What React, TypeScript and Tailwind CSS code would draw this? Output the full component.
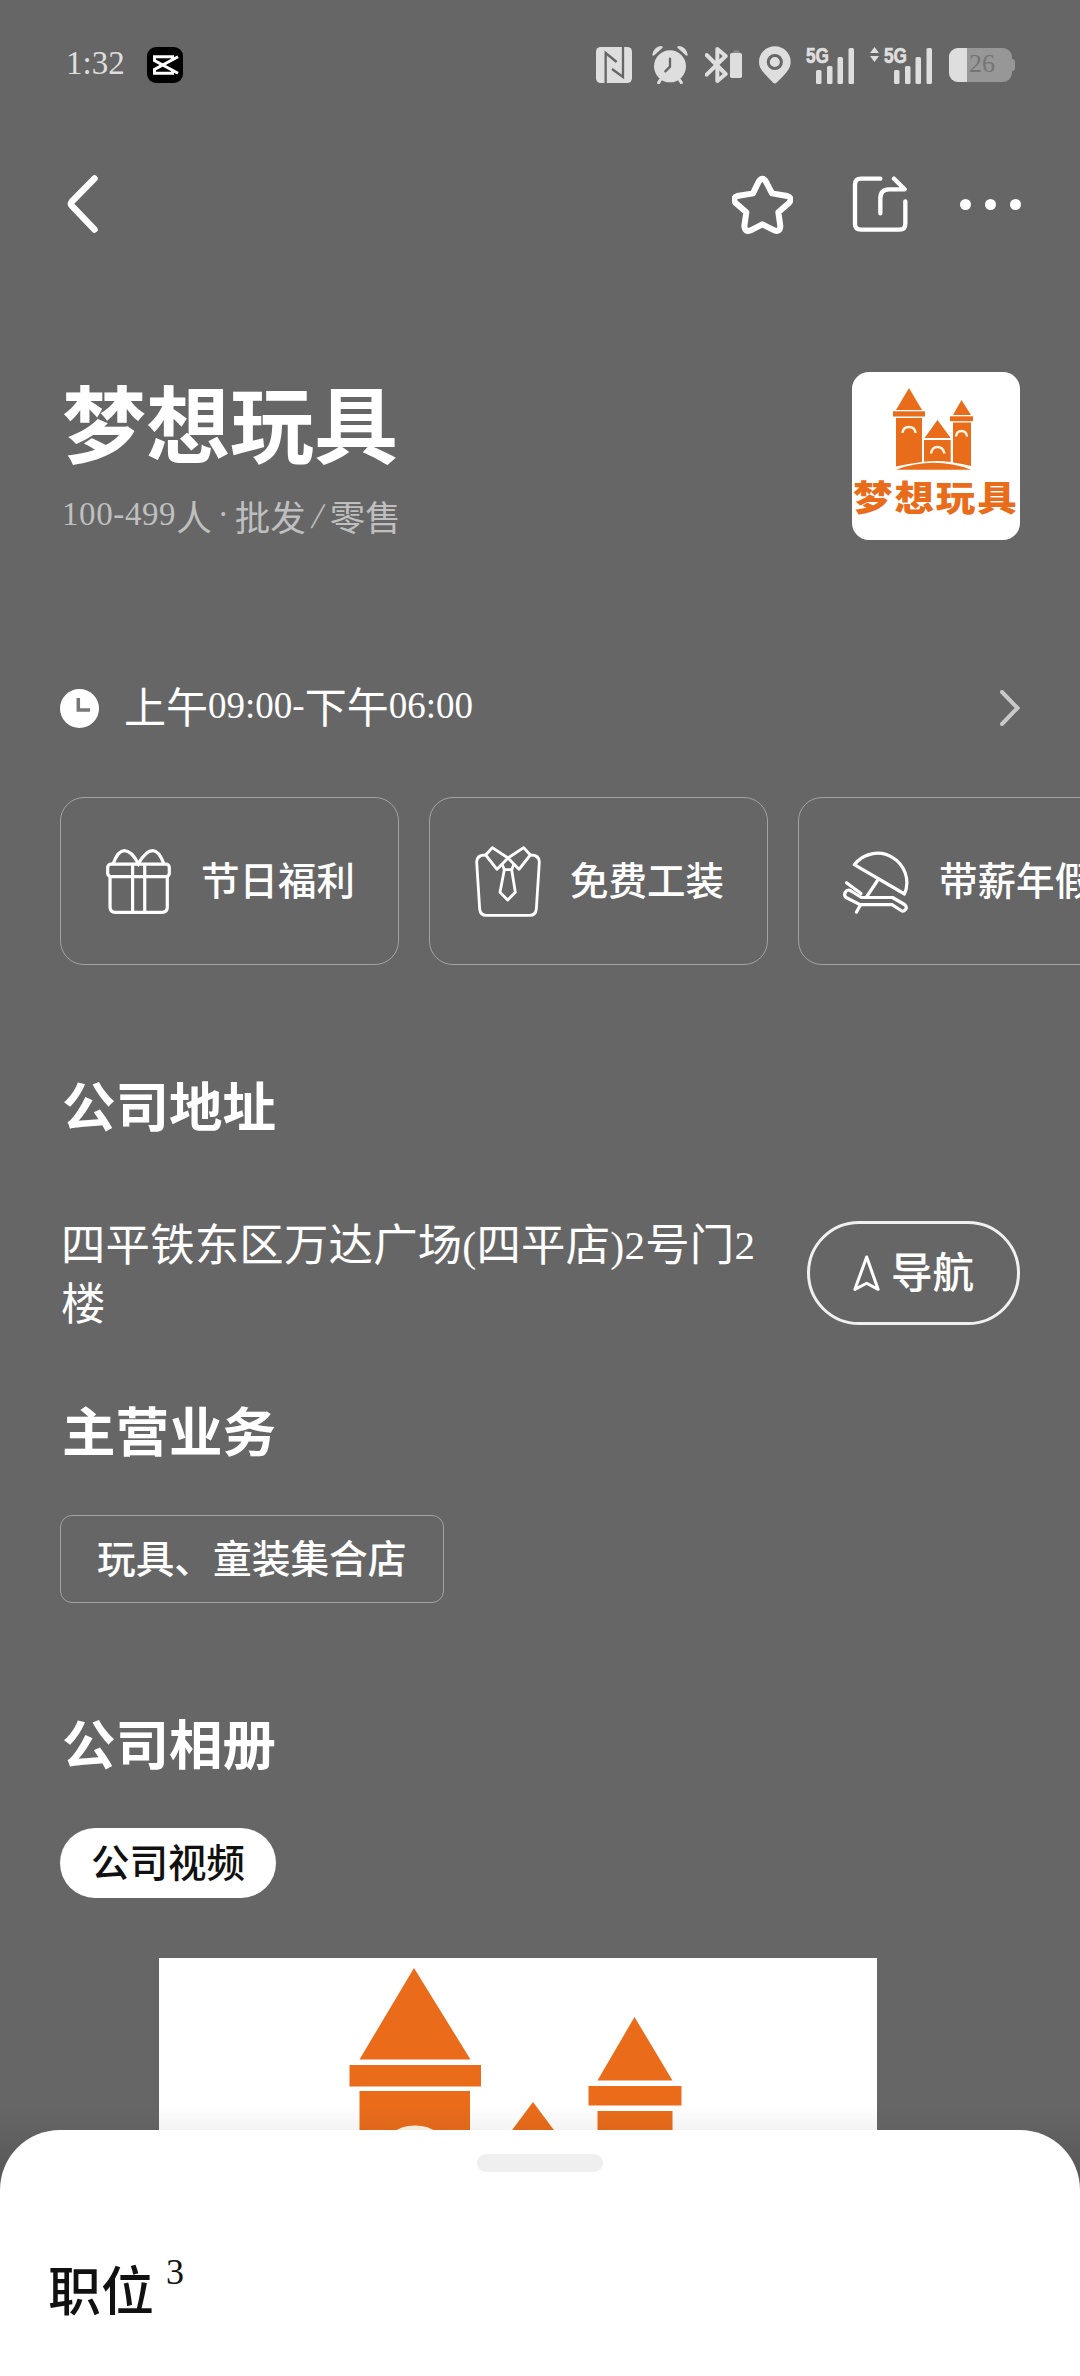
import type { ReactNode } from "react";
import clsx from "clsx";

const Num = ({
  children,
  className,
}: {
  children: ReactNode;
  className?: string;
}) => (
  <span
    className={clsx(
      "font-['Liberation_Serif',serif] leading-none font-normal",
      className
    )}
  >
    {children}
  </span>
);

const Signal = ({ arrows }: { arrows?: boolean }) => (
  <svg
    width={arrows ? 62 : 48}
    height="48"
    viewBox={arrows ? "-14 -5 62 48" : "0 -5 48 48"}
    fill="#dedede"
  >
    {arrows && <path d="M-14 7 L-9.5 1 L-5 7Z M-14 10 L-9.5 16 L-5 10Z" />}
    <text
      x="0"
      y="16.5"
      fontSize="22"
      fontWeight="700"
      fontFamily="Liberation Sans, sans-serif"
      textLength="23"
      lengthAdjust="spacingAndGlyphs"
      stroke="#dedede"
      strokeWidth="0.7"
    >
      5G
    </text>
    <rect x="10" y="24" width="5.5" height="14" rx="1.5" />
    <rect x="21" y="20" width="5.5" height="18" rx="1.5" />
    <rect x="31.5" y="11" width="5.5" height="27" rx="1.5" />
    <rect x="42.5" y="2" width="5.5" height="36" rx="1.5" />
  </svg>
);

const StatusBar = () => (
  <div className="flex h-[129px] shrink-0 items-center pl-[66px] pr-[65px]">
    <Num className="-mt-[2px] text-[33px] text-[#dedede]">1:32</Num>
    <svg className="ml-[22px]" width="36" height="36" viewBox="0 0 36 36">
      <rect width="36" height="36" rx="9" fill="#000" />
      <path
        d="M25.5 12.5V9.8H7.5V13.5L31 26.2M25.5 23.7V26.3H7.5V22.5L31 9.8"
        fill="none"
        stroke="#fff"
        strokeWidth="3"
      />
    </svg>
    <div className="ml-auto flex items-center">
      {/* nfc */}
      <svg width="36" height="36" viewBox="0 0 108 108">
        <rect width="108" height="108" rx="14" fill="#dedede" />
        <path
          d="M29 108V18L62 45M81 0V90L48 66"
          fill="none"
          stroke="#666"
          strokeWidth="7"
        />
      </svg>
      {/* alarm */}
      <svg
        className="ml-[20px]"
        width="36"
        height="38"
        viewBox="0 0 108 114"
        fill="#dedede"
      >
        <circle cx="54" cy="61" r="48" />
        <path d="M1 26Q6 0 30 0Q35 4 30 7L7 28Q1 31 1 26Z" />
        <path d="M107 26Q102 0 78 0Q73 4 78 7L101 28Q107 31 107 26Z" />
        <path
          d="M25 102L20 110M83 102L88 110"
          stroke="#dedede"
          strokeWidth="9"
          strokeLinecap="round"
        />
        <path
          d="M54 38V62L40 76"
          fill="none"
          stroke="#666"
          strokeWidth="7"
          strokeLinecap="round"
        />
      </svg>
      {/* bluetooth */}
      <svg
        className="ml-[17px]"
        width="37"
        height="38"
        viewBox="0 0 111 114"
      >
        <path
          d="M5 27L62 84L37 105V9L62 30L5 86"
          fill="none"
          stroke="#dedede"
          strokeWidth="12"
          strokeLinecap="round"
          strokeLinejoin="round"
        />
        <rect x="75" y="21" width="36" height="75" rx="5" fill="#dedede" />
        <path d="M82 21L88 13H100L106 21Z" fill="#8a8a8a" />
      </svg>
      {/* location */}
      <svg
        className="ml-[17px]"
        width="32"
        height="38"
        viewBox="0 0 95 112"
        fill="#dedede"
      >
        <path d="M47 0A47 47 0 0 1 94 47C94 66 82 79 52 109Q47 113 42 109C12 79 0 66 0 47A47 47 0 0 1 47 0Z" />
        <circle cx="47" cy="47" r="19.5" stroke="#666" strokeWidth="9" />
      </svg>
      <div className="ml-[15px] flex gap-[16px]">
        <Signal />
        <Signal arrows />
      </div>
      {/* battery */}
      <div className="ml-[17px] flex items-center">
        <div className="flex h-[34px] w-[63px] items-center overflow-hidden rounded-[9px] bg-[#979797]">
          <div className="h-full w-[18px] bg-[#dedede]" />
          <Num className="-mt-[2px] ml-[2px] text-[26px] text-[#757575]">
            26
          </Num>
        </div>
        <div className="h-[12px] w-[3px] rounded-r-[3px] bg-[#979797]" />
      </div>
    </div>
  </div>
);

const Header = () => (
  <div className="mt-px flex h-[148px] shrink-0 items-center pl-[67px] pr-[59px]">
    <svg width="31" height="58" viewBox="0 0 31 58">
      <path
        d="M27.5 3.5L5 26.5Q3 29 5 31L27.5 54.5"
        fill="none"
        stroke="#fff"
        strokeWidth="6.5"
        strokeLinecap="round"
      />
    </svg>
    <svg className="ml-auto" width="61" height="59" viewBox="0 0 183 177">
      <path
        d="M79 22Q91 1 103 22L120 55L166 63Q183 69 171 84L139 112L145 153Q144 173 127 166L91 148L56 166Q39 173 37 153L43 112L11 84Q0 69 16 63L63 55Z"
        fill="none"
        stroke="#fff"
        strokeWidth="18"
        strokeLinejoin="round"
      />
    </svg>
    <svg className="ml-[59px]" width="56" height="56" viewBox="0 0 166 168">
      <path
        d="M84 8H26Q8 8 8 26V144Q8 161 26 161H141Q159 161 159 144V76M125 8L157 40H110Q84 41 84 67V112"
        fill="none"
        stroke="#fff"
        strokeWidth="13"
        strokeLinecap="round"
        strokeLinejoin="round"
      />
    </svg>
    <div className="ml-[52px] flex gap-[14px]">
      <span className="size-[11px] rounded-full bg-white" />
      <span className="size-[11px] rounded-full bg-white" />
      <span className="size-[11px] rounded-full bg-white" />
    </div>
  </div>
);

const LogoCard = () => (
  <div className="size-[168px] overflow-hidden rounded-[17px] bg-white">
    <svg width="168" height="168" viewBox="0 0 168 168" fill="#e96c1b">
      <path d="M57 16L70 38H44Z" />
      <rect x="41" y="39.3" width="32" height="5.2" />
      <path d="M44 46H70V90Q56 91.5 44 94.5Z" />
      <path d="M109.5 28L119 43H101Z" />
      <rect x="98" y="44.3" width="23" height="4.9" />
      <path d="M101 50.5H119V94Q110 91.5 101 90.5Z" />
      <path d="M85.5 48L98.7 66H72.5Z" />
      <path d="M72 68H98.7V90Q86 88.3 72 89.7Z" />
      <path d="M44 97.7Q82 84 119 97.7Z" />
      <path
        d="M50.5 61Q51 55 57 55T63.5 61M79 81.500Q80 75 85.500 75T92.500 81.500M104 64.500Q104.500 59 109.500 59T115 64.500"
        fill="none"
        stroke="#fff6e4"
        strokeWidth="2.4"
      />
      <text
        transform="translate(0 138.500) scale(1 .88)"
        x="1"
        y="0"
        fontSize="39.500"
        fontWeight="900"
        letterSpacing="1.900"
        fontFamily="Noto Sans CJK SC, sans-serif"
      >
        梦想玩具
      </text>
    </svg>
  </div>
);

const GiftIcon = () => (
  <svg
    width="65"
    height="65"
    viewBox="0 0 193 193"
    fill="none"
    stroke="#fff"
    strokeWidth="9.500"
  >
    <rect x="5" y="45" width="183" height="37" rx="10" />
    <path d="M12 82V173Q12 188 28 188H166Q182 188 182 173V82M79 45V188M115 45V188" />
    <path d="M21 44Q36 5 54 5Q76 5 96 44Q118 5 139 5Q157 5 172 44" />
  </svg>
);

const ShirtIcon = () => (
  <svg
    width="66"
    height="71"
    viewBox="0 0 198 213"
    fill="none"
    stroke="#fff"
    strokeWidth="8.500"
    strokeLinejoin="round"
  >
    <path d="M32 27Q5 27 5 48L14 189Q16 208 34 208H164Q182 208 184 189L193 48Q193 27 166 27" />
    <path d="M52 5L99 36L66 70L32 27Z" />
    <path d="M146 5L99 36L132 70L166 27Z" />
    <path d="M81 54L88 71H110L117 54M88 71L75 139L98 162L121 139L110 71" />
  </svg>
);

const BeachIcon = () => (
  <svg
    width="67"
    height="66"
    viewBox="0 0 67 66"
    fill="none"
    stroke="#fff"
    strokeWidth="3.200"
    strokeLinecap="round"
    strokeLinejoin="round"
  >
    <path d="M11.300 16.700A29.300 29.300 0 0 1 61.500 46Z" />
    <path d="M35.500 31L23.500 49M3.500 34.700L18 45.500" />
    <path d="M8 43L18.500 49.500H49.500L61.500 56.500Q64.500 59 62.500 61.500T58 62.500L49 56.700H17L3 49.500Q0.500 47 2.500 44T8 43Z" />
    <path d="M17.500 57L13.500 64" />
  </svg>
);

const Benefit = ({ icon, label }: { icon: ReactNode; label: string }) => (
  <div className="flex h-[168px] w-[339px] shrink-0 items-center rounded-[24px] border border-[#a3a3a3]">
    <div className="ml-[43px] flex w-[69px] justify-center">{icon}</div>
    <span className="-mt-[6px] ml-[28px] text-[38.5px] leading-none font-medium whitespace-nowrap">
      {label}
    </span>
  </div>
);

const Heading = ({
  children,
  className,
}: {
  children: ReactNode;
  className?: string;
}) => (
  <h2
    className={clsx(
      "ml-[62px] h-[54px] shrink-0 text-[53.5px] leading-[54px] font-bold",
      className
    )}
  >
    {children}
  </h2>
);

const Photo = () => (
  <div className="mt-[60px] ml-[159px] h-[300px] w-[718px] shrink-0 bg-white">
    <svg width="718" height="300" viewBox="0 0 718 300" fill="#ea6c1b">
      <path d="M255 10L311.500 101.500H200.500Z" />
      <rect x="190.500" y="107" width="131.500" height="21.500" />
      <rect x="200.500" y="133" width="110.500" height="167" />
      <path d="M475.500 59L513.500 122.500H438.500Z" />
      <rect x="429.500" y="128" width="93" height="19.500" />
      <rect x="438.500" y="153" width="75" height="147" />
      <path d="M374 144L421 207H327Z" />
      <path
        d="M230 197Q232 172 256 172T283 197"
        fill="none"
        stroke="#fff6e4"
        strokeWidth="9"
      />
    </svg>
  </div>
);

const App = () => {
  return (
    <div className="relative flex h-[2376px] w-[1080px] flex-col overflow-hidden bg-[#666] font-['Noto_Sans_CJK_SC',sans-serif] font-medium text-white">
      <StatusBar />
      <Header />

      <div className="mt-[94px] flex h-[168px] shrink-0 justify-between pr-[60px] pl-[62px]">
        <div>
          <h1 className="mt-[7px] text-[84px] leading-[84px] font-bold">
            梦想玩具
          </h1>
          <p className="mt-[35px] flex text-[35.5px] leading-[36px] font-normal text-[#bfbfbf]">
            <Num className="text-[33px] tracking-[0.6px]">100-499</Num>
            <span>人</span>
            <Num className="mx-[6px] text-[33px]">·</Num>
            <span>批发</span>
            <Num className="mx-[7px] -skew-x-12 text-[36px]">/</Num>
            <span>零售</span>
          </p>
        </div>
        <LogoCard />
      </div>

      <div className="mt-[138px] flex h-[60px] shrink-0 items-center pr-[60px] pl-[60px]">
        <svg width="39" height="39" viewBox="0 0 39 39">
          <circle cx="19.500" cy="19.500" r="19.500" fill="#fff" />
          <path
            d="M18.300 9V21H30"
            fill="none"
            stroke="#777"
            strokeWidth="3.500"
          />
        </svg>
        <p className="-mt-[6px] ml-[25px] flex items-center text-[42px] leading-none font-normal">
          上午<Num className="text-[37px]">09:00-</Num>下午
          <Num className="text-[37px]">06:00</Num>
        </p>
        <svg className="ml-auto" width="20" height="36" viewBox="0 0 20 36">
          <path
            d="M2 2L17.500 18L2 34"
            fill="none"
            stroke="#c9c9c9"
            strokeWidth="4"
            strokeLinecap="round"
          />
        </svg>
      </div>

      <div className="mt-[59px] flex shrink-0 gap-[30px] overflow-hidden pl-[60px]">
        <Benefit icon={<GiftIcon />} label="节日福利" />
        <Benefit icon={<ShirtIcon />} label="免费工装" />
        <Benefit icon={<BeachIcon />} label="带薪年假" />
      </div>

      <Heading className="mt-[112px]">公司地址</Heading>
      <div className="mt-[83px] flex h-[118px] shrink-0 items-center justify-between pr-[60px] pl-[61px]">
        <p className="-mt-[5px] w-[705px] text-[44.4px] leading-[59px] font-normal tracking-[0.2px] break-all">
          四平铁东区万达广场<Num className="text-[42px]">(</Num>四平店
          <Num className="text-[42px]">)</Num>
          <Num className="relative -top-[2px] text-[41px]">2</Num>号门
          <Num className="relative -top-[2px] text-[41px]">2</Num>楼
        </p>
        <button className="flex h-[104px] w-[213px] items-center justify-center rounded-full border-3 border-[#f0f0f0]">
          <svg width="27" height="36" viewBox="0 0 79 107">
            <path
              d="M40 6L74 102L40 84L5 102Z"
              fill="none"
              stroke="#fff"
              strokeWidth="9"
              strokeLinejoin="round"
            />
          </svg>
          <span className="-mt-[5px] ml-[11px] text-[41.500px] leading-none">
            导航
          </span>
        </button>
      </div>

      <Heading className="mt-[70px]">主营业务</Heading>
      <div className="mt-[59px] ml-[60px] flex h-[88px] w-[384px] shrink-0 items-center rounded-[12px] border border-[#a3a3a3] pb-[6px] pl-[36px] text-[38.7px] leading-none whitespace-nowrap">
        玩具、童装集合店
      </div>

      <Heading className="mt-[112px]">公司相册</Heading>
      <div className="mt-[59px] ml-[60px] flex h-[70px] w-[216px] shrink-0 items-center justify-center rounded-full bg-white pb-[6px] text-[38.5px] leading-none text-[#111]">
        公司视频
      </div>
      <Photo />

      {/* jobs sheet over the page */}
      <div className="absolute inset-x-0 bottom-0 flex h-[271px] flex-col bg-gradient-to-b from-black/0 from-0% to-black/15 to-[80px] pt-[25px]">
        <div className="flex flex-1 flex-col rounded-t-[60px] bg-white text-[#111]">
          <div className="mx-auto mt-[24px] h-[18px] w-[126px] rounded-full bg-[#efefef]" />
          <div className="mt-[89px] ml-[48px] flex">
            <span className="text-[53px] leading-[54px]">职位</span>
            <Num className="-mt-[7px] ml-[12px] text-[36px]">3</Num>
          </div>
        </div>
      </div>
    </div>
  );
};

export default App;
